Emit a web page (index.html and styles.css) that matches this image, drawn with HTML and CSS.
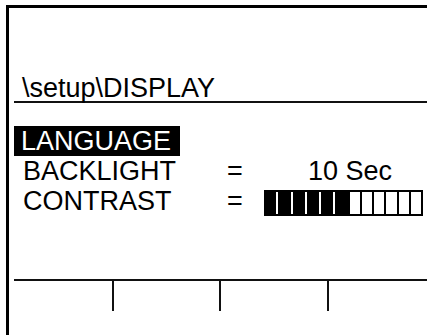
FILE: index.html
```html
<!DOCTYPE html>
<html lang="en">
<head>
  <meta charset="UTF-8" />
  <meta name="viewport" content="width=device-width, initial-scale=1.0" />
  <title>setup - DISPLAY</title>
  <link rel="stylesheet" href="styles.css">
</head>
<body>

<div class="screen">
  <div class="path">\setup\DISPLAY</div>

  <div class="menu">
    <div class="row">
      <span class="label selected">LANGUAGE</span>
    </div>
    <div class="row">
      <span class="label">BACKLIGHT</span>
      <span class="eq">=</span>
      <span class="value">10 Sec</span>
    </div>
    <div class="row">
      <span class="label">CONTRAST</span>
      <span class="eq">=</span>
      <span class="bar">
        <i class="seg on"></i><i class="seg on"></i><i class="seg on"></i>
        <i class="seg on"></i><i class="seg on"></i><i class="seg on last"></i>
        <i class="seg"></i><i class="seg"></i><i class="seg"></i>
        <i class="seg"></i><i class="seg"></i><i class="seg"></i>
      </span>
    </div>
  </div>

  <div class="softkeys">
    <div class="key k1"></div>
    <div class="key k2"></div>
    <div class="key k3"></div>
    <div class="key k4"></div>
  </div>
</div>

</body>
</html>
```

FILE: styles.css
```css
body {
  margin: 0;
  background: #fff;
  font-family: "Liberation Sans", Arial, sans-serif;
  color: #000;
  overflow: hidden;
}

.screen {
  margin: 5px 0 0 6px;
  height: 327px;
  border-top: 3px solid #000;
  border-left: 3px solid #000;
}

.path {
  margin: 67px 0 0 5px;
  padding-left: 8px;
  font-size: 27px;
  line-height: 26px;
  border-bottom: 2px solid #111;
}

.menu {
  margin: 23px 0 0 5px;
  font-size: 27px;
  line-height: 30px;
}

.row {
  display: grid;
  grid-template-columns: 213px 37px auto;
  align-items: center;
  height: 30px;
}

.label {
  padding-left: 9px;
}

.label.selected {
  justify-self: start;
  padding: 0 9px 0 7px;
  background: #000;
  color: #fff;
}

.value {
  padding-left: 44px;
}

.bar {
  display: flex;
  gap: 2px;
  width: 159px;
  height: 26px;
  margin-top: 4px;
  padding: 2px;
  box-sizing: border-box;
  background: #000;
}

.seg {
  flex: 1;
  background: #fff;
}

.seg.on {
  background: #000;
  border-right: 2px solid #fff;
}

.seg.on.last {
  border-right: none;
}

.softkeys {
  display: flex;
  margin: 63px 0 0 5px;
  height: 30px;
  border-top: 2px solid #111;
}

.key {
  box-sizing: border-box;
  border-right: 2px solid #111;
}

.k1 { width: 100px; }
.k2 { width: 107px; }
.k3 { width: 108px; }
.k4 { flex: 1; border-right: none; }
```
